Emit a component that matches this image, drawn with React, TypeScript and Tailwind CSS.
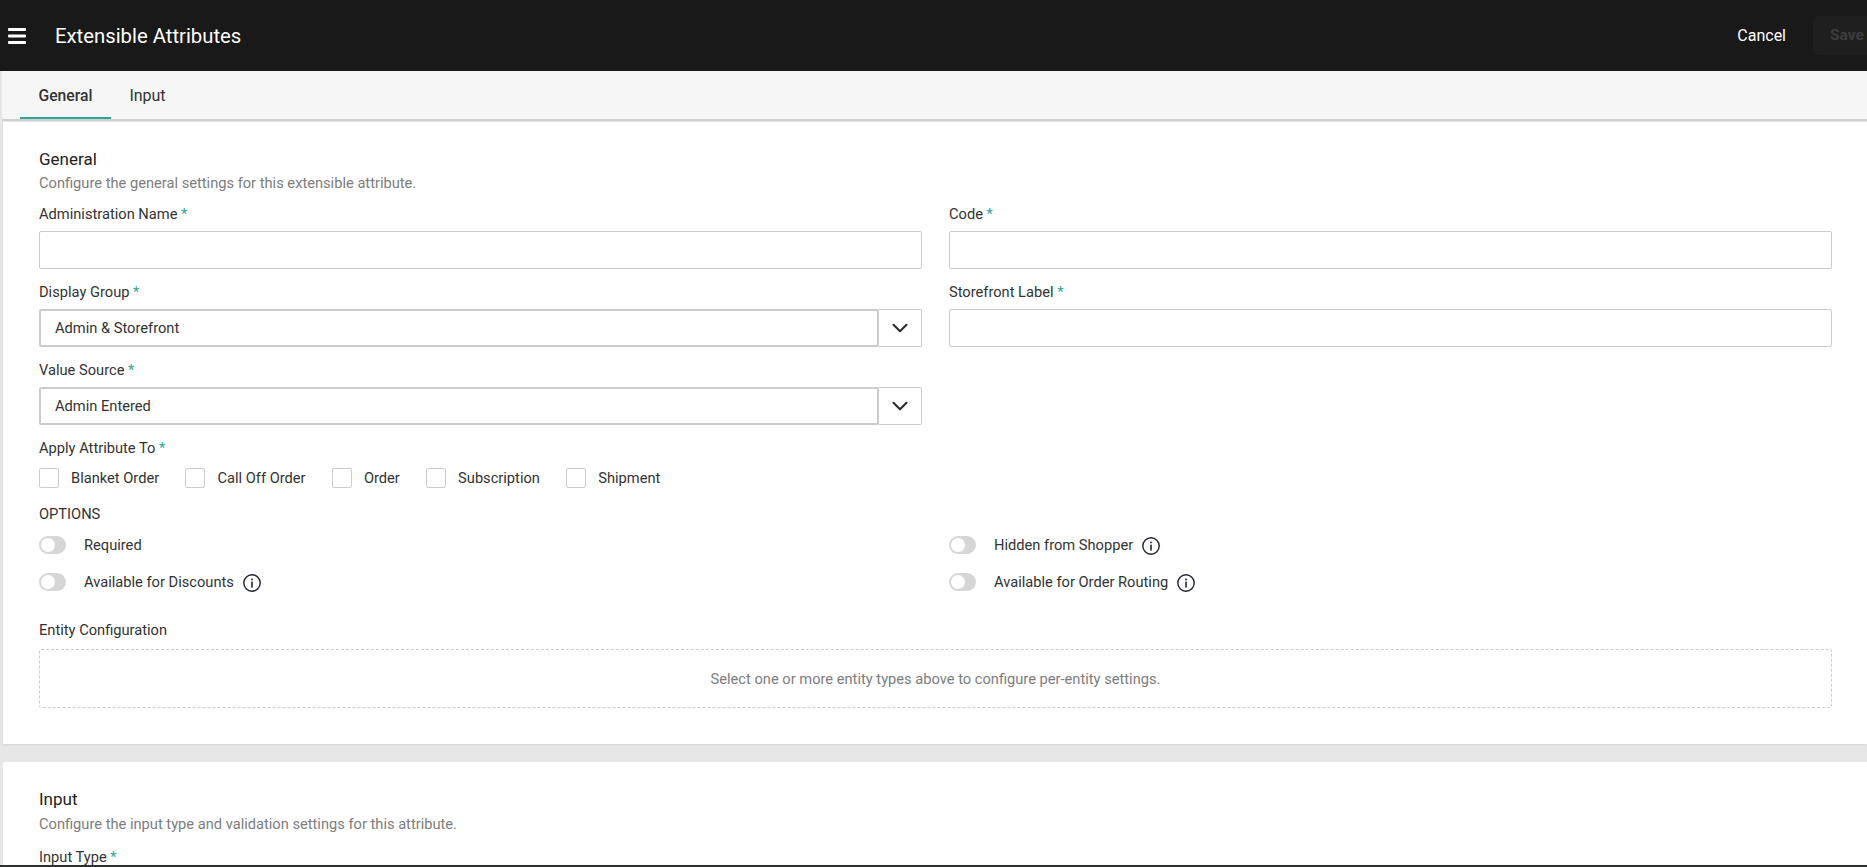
import { ChevronDown } from "lucide-react";

function Req() {
  return <span className="text-[#2ea597]"> *</span>;
}

function FieldLabel({ text, required }: { text: string; required?: boolean }) {
  return (
    <label className="block h-[22px] mb-[6px] text-[14.67px] leading-[22px] text-[#333]">
      {text}
      {required && <Req />}
    </label>
  );
}

function TextField({ label }: { label: string }) {
  return (
    <div className="mb-[12px]">
      <FieldLabel text={label} required />
      <input className="block w-full h-[38px] bg-white border border-[#ccc] rounded-[2px]" />
    </div>
  );
}

function SelectField({ label, value }: { label: string; value: string }) {
  return (
    <div className="mb-[12px]">
      <FieldLabel text={label} required />
      <div className="flex h-[38px]">
        <div className="flex-1 flex items-center pl-[14px] border-2 border-[#ccc] rounded-[2px] text-[14.67px] text-[#333]">
          {value}
        </div>
        <button className="w-[43px] flex items-center justify-center border border-l-0 border-[#ccc] rounded-r-[2px] text-[#2b2b2b]">
          <ChevronDown size={26} strokeWidth={1.9} />
        </button>
      </div>
    </div>
  );
}

function Check({ label }: { label: string }) {
  return (
    <div className="flex items-center gap-[12px]">
      <span className="w-[20px] h-[20px] border border-[#ccc] rounded-[2px] bg-white" />
      <span className="text-[14.67px] leading-[20px] text-[#333]">{label}</span>
    </div>
  );
}

function InfoIcon() {
  return (
    <svg width="20" height="20" viewBox="0 0 20 20" fill="none" className="ml-[8px] mt-[2px] shrink-0 text-[#1f2430]">
      <circle cx="10" cy="10" r="8.2" stroke="currentColor" strokeWidth="1.4" />
      <rect x="9.2" y="8.6" width="1.6" height="6" fill="currentColor" />
      <rect x="9.2" y="5.6" width="1.6" height="1.7" fill="currentColor" />
    </svg>
  );
}

function Toggle({ label, info }: { label: string; info?: boolean }) {
  return (
    <div className="flex items-center h-[18px]">
      <span className="relative w-[27px] h-[18px] rounded-full bg-[#d6d6d6]">
        <span className="absolute left-[2px] top-[2px] w-[14px] h-[14px] rounded-full bg-white" />
      </span>
      <span className="ml-[18px] text-[14.67px] leading-[20px] text-[#333]">{label}</span>
      {info && <InfoIcon />}
    </div>
  );
}

export default function App() {
  return (
    <div
      className="relative h-screen overflow-hidden bg-[#e6e6e6] flex flex-col"
      style={{ fontFamily: "Roboto, sans-serif" }}
    >
      <header className="h-[71px] shrink-0 bg-[#191919] flex items-center text-white">
        <svg width="18" height="16" viewBox="0 0 18 16" className="ml-[8px]" fill="#fff">
          <rect y="0" width="18" height="3" rx="1" />
          <rect y="6.5" width="18" height="3" rx="1" />
          <rect y="13" width="18" height="3" rx="1" />
        </svg>
        <h1 className="ml-[29px] text-[20.3px] leading-[28px]">Extensible Attributes</h1>
        <div className="ml-auto flex items-center">
          <button className="text-[16px] mr-[27px]">Cancel</button>
          <button className="w-[54px] h-[39px] pl-[17px] text-left bg-[#1f1f1f] rounded-l-[6px] text-[15.5px] font-bold text-[#3d3d3d] whitespace-nowrap overflow-hidden">
            Save
          </button>
        </div>
      </header>

      <div className="ml-[2px] h-[50px] shrink-0 bg-[#f6f6f6] border-b-2 border-[#cfcfcf] flex pl-[18px]">
        <div className="w-[91px] h-[48px] flex items-center justify-center pt-[4px] border-b-2 border-[#2ea597] text-[15.7px] font-medium text-[#333]">
          General
        </div>
        <div className="w-[73px] h-[48px] flex items-center justify-center pt-[2px] text-[16px] text-[#333]">Input</div>
      </div>

      <section className="ml-[3px] mt-[1px] h-[622px] shrink-0 bg-white pt-[27px] pl-[36px] pr-[35px] shadow-[0_1px_2px_rgba(0,0,0,0.08)]">
        <h2 className="text-[17px] leading-[20px] text-[#222]">General</h2>
        <p className="mt-[4px] mb-[10px] text-[14.67px] leading-[20px] text-[#7d7d7d]">
          Configure the general settings for this extensible attribute.
        </p>
        <div className="grid grid-cols-2 gap-x-[27px]">
          <TextField label="Administration Name" />
          <TextField label="Code" />
          <SelectField label="Display Group" value="Admin & Storefront" />
          <TextField label="Storefront Label" />
          <SelectField label="Value Source" value="Admin Entered" />
        </div>
        <FieldLabel text="Apply Attribute To" required />
        {/* top margin collapses with the label's mb */}
        <div className="mt-[9px] flex gap-[26.3px]">
          <Check label="Blanket Order" />
          <Check label="Call Off Order" />
          <Check label="Order" />
          <Check label="Subscription" />
          <Check label="Shipment" />
        </div>
        <div className="mt-[16px] text-[14.67px] leading-[20px] text-[#333]">OPTIONS</div>
        <div className="mt-[12px] grid grid-cols-2 gap-x-[27px] gap-y-[19px]">
          <Toggle label="Required" />
          <Toggle label="Hidden from Shopper" info />
          <Toggle label="Available for Discounts" info />
          <Toggle label="Available for Order Routing" info />
        </div>
        <div className="mt-[28px]">
          <FieldLabel text="Entity Configuration" />
        </div>
        <div className="mt-[8px] h-[59px] flex items-center justify-center border border-dashed border-[#ccc] rounded-[2px] text-[14.67px] text-[#7d7d7d]">
          Select one or more entity types above to configure per-entity settings.
        </div>
      </section>

      <section className="ml-[3px] mt-[18px] flex-1 bg-white pt-[27px] pl-[36px] pr-[35px]">
        <h2 className="text-[17px] leading-[20px] text-[#222]">Input</h2>
        <p className="mt-[5px] mb-[12px] text-[14.67px] leading-[20px] text-[#7d7d7d]">
          Configure the input type and validation settings for this attribute.
        </p>
        <FieldLabel text="Input Type" required />
      </section>

      <div className="absolute left-0 right-0 bottom-0 h-[2px] bg-[#2c2f2e]" />
    </div>
  );
}
